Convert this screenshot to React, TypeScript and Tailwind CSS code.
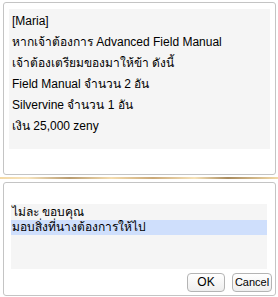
const font = { fontFamily: "'Liberation Sans', 'Noto Sans', sans-serif" }

export default function App() {
  return (
    <div className="relative w-[278px] h-[297px] bg-white overflow-hidden text-[12px] text-black" style={font}>
      {/* Dialog text window */}
      <div className="absolute left-[3px] top-[2px] w-[273px] h-[173px] border border-[#c4c4c4] rounded-[3px] bg-white">
        <div className="mt-[6px] mx-[5px] h-[140px] bg-[#f5f5f5] pl-[3px] pt-[2px]">
          <div className="leading-[21px]">[Maria]</div>
          <div className="leading-[21px]">หากเจ้าต้องการ Advanced Field Manual</div>
          <div className="leading-[21px]">เจ้าต้องเตรียมของมาให้ข้า ดังนี้</div>
          <div className="leading-[21px]">Field Manual จำนวน 2 อัน</div>
          <div className="leading-[21px]">Silvervine จำนวน 1 อัน</div>
          <div className="leading-[21px]">เงิน 25,000 zeny</div>
        </div>
      </div>

      {/* gold divider */}
      <div className="absolute left-0 top-[177px] w-[278px] h-[2px] bg-[linear-gradient(90deg,#f3d9a6_0%,#f6e3bd_10%,#b89b6f_25%,#f4dcae_40%,#caa877_55%,#f6e2b8_70%,#a88a5d_82%,#f4dba9_100%)]" />

      {/* Menu window */}
      <div className="absolute left-[3px] top-[182px] w-[273px] h-[114px] border border-[#c4c4c4] rounded-[3px] bg-white">
        <div className="mt-[21px] ml-[7px] w-[256px] h-[65px] bg-[#f5f5f5] pt-[1px]">
          <div className="h-[15px] leading-[15px] pl-[1px]">ไม่ละ ขอบคุณ</div>
          <div className="h-[15px] leading-[15px] pl-[1px] bg-[#cfdffc]">มอบสิ่งที่นางต้องการให้ไป</div>
        </div>
        <div className="flex justify-end gap-[7px] mt-[4px] mr-[3px]">
          <button className="w-[38px] h-[19px] px-0 rounded-[4px] border border-[#b4b4b4] bg-[linear-gradient(#ffffff,#eeeeee)] leading-[17px] text-[12px]">OK</button>
          <button className="w-[40px] h-[19px] px-0 rounded-[4px] border border-[#b4b4b4] bg-[linear-gradient(#ffffff,#eeeeee)] leading-[17px] text-[11px]">Cancel</button>
        </div>
      </div>
    </div>
  )
}
